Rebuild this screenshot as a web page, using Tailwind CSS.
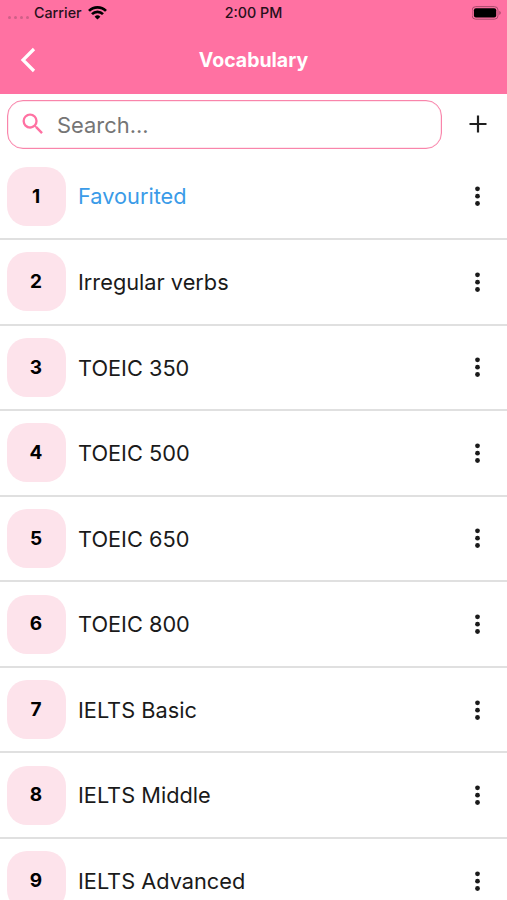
<!DOCTYPE html>
<html lang="en">
<head>
  <meta charset="UTF-8" />
  <meta name="viewport" content="width=device-width, initial-scale=1.0" />
  <title>Vocabulary</title>
  <script src="https://cdn.jsdelivr.net/npm/@tailwindcss/browser@4"></script>
</head>
<body class="h-screen overflow-hidden bg-white font-['Inter',sans-serif] text-[#1a1a1a]">
  <header class="h-[93.5px] bg-[#ff71a2]">
    <!-- status bar -->
    <div class="grid h-[26px] grid-cols-3 items-center text-[14.3px] font-medium text-[#26101a]">
      <div class="flex items-center pl-2">
        <div class="mt-2 flex w-[26px] gap-[3px]">
          <span class="size-[3px] rounded-full bg-[#cf6088]"></span>
          <span class="size-[3px] rounded-full bg-[#cf6088]"></span>
          <span class="size-[3px] rounded-full bg-[#cf6088]"></span>
          <span class="size-[3px] rounded-full bg-[#cf6088]"></span>
        </div>
        <span>Carrier</span>
        <svg class="ml-[6px] h-[14px] w-[19px]" viewBox="0 0 19 14" fill="none" stroke="#000" stroke-width="2.7">
          <path d="M1 4.9a12 12 0 0 1 17 0" />
          <path d="M4 8.1a7.8 7.8 0 0 1 11 0" />
          <path d="M9.5 13.6 6.6 10.7a4.1 4.1 0 0 1 5.8 0z" fill="#000" stroke="none" />
        </svg>
      </div>
      <div class="text-center">2:00 PM</div>
      <div class="flex justify-end pr-[5px]">
        <svg class="h-[14px] w-[30px]" viewBox="0 0 30 14">
          <rect x="0.1" y="0.6" width="25.9" height="12.6" rx="3.6" fill="none" stroke="#a94a6c" stroke-width="1" />
          <rect x="1.9" y="2.2" width="22.3" height="9.4" rx="2" fill="#000" />
          <path d="M27.3 4.8c2 .8 2 3.4 0 4.2z" fill="#a94a6c" />
        </svg>
      </div>
    </div>
    <!-- nav bar -->
    <div class="grid h-[67px] grid-cols-3 items-center text-white">
      <svg class="ml-[20px] h-[26px] w-4" viewBox="0 0 16 26" fill="none" stroke="currentColor" stroke-width="3.2">
        <path d="M14 2 3 13 14 24" />
      </svg>
      <h1 class="pt-[2px] text-center text-[19.5px] font-bold">Vocabulary</h1>
    </div>
  </header>

  <main>
    <div class="flex h-[61px] items-center pr-[17px] pl-[7px]">
      <div class="flex h-[49px] w-[435px] items-center rounded-2xl border border-[#f985ab] pl-[11px] ring-[0.5px] ring-[#f985ab]/40 ring-inset">
        <svg class="size-7" viewBox="0 0 24 24" fill="#ff71a2">
          <path d="M15.5 14h-.79l-.28-.27A6.47 6.47 0 0 0 16 9.5 6.5 6.5 0 1 0 9.5 16c1.61 0 3.09-.59 4.23-1.57l.27.28v.79l5 4.99L20.49 19l-4.99-5zm-6 0C7.01 14 5 11.99 5 9.5S7.01 5 9.5 5 14 7.01 14 9.5 11.99 14 9.5 14z" />
        </svg>
        <span class="ml-[10px] pt-[2px] text-[21.9px] text-[#757575]">Search...</span>
      </div>
      <svg class="ml-auto size-[24px]" viewBox="0 0 24 24" stroke="#1f1f1f" stroke-width="2.2">
        <path d="M3.5 12h17M12 3.5v17" />
      </svg>
    </div>
    <ul id="list"></ul>
  </main>

  <script>
    const words = [
      "Favourited", "Irregular verbs", "TOEIC 350", "TOEIC 500", "TOEIC 650",
      "TOEIC 800", "IELTS Basic", "IELTS Middle", "IELTS Advanced"
    ];
    document.getElementById("list").innerHTML = words.map((name, i) => `
      <li class="flex h-[85.55px] items-center border-b-[2px] border-[#e0e0e0] pr-[20px] pl-[7px]">
        <div class="flex size-[59px] items-center justify-center rounded-[20px] bg-[#fde3eb] pt-px pr-px text-[19px] font-bold text-black">${i + 1}</div>
        <span class="ml-[12px] pt-px text-[21.75px] ${i === 0 ? "text-[#3a9be8]" : "text-[#1a1a1a]"}">${name}</span>
        <svg class="ml-auto h-5 w-[19px]" viewBox="0 0 19 20" fill="#1a1a1a">
          <circle cx="9.5" cy="2.8" r="2.4" />
          <circle cx="9.5" cy="10.2" r="2.4" />
          <circle cx="9.5" cy="17.5" r="2.4" />
        </svg>
      </li>`).join("");
  </script>
</body>
</html>
